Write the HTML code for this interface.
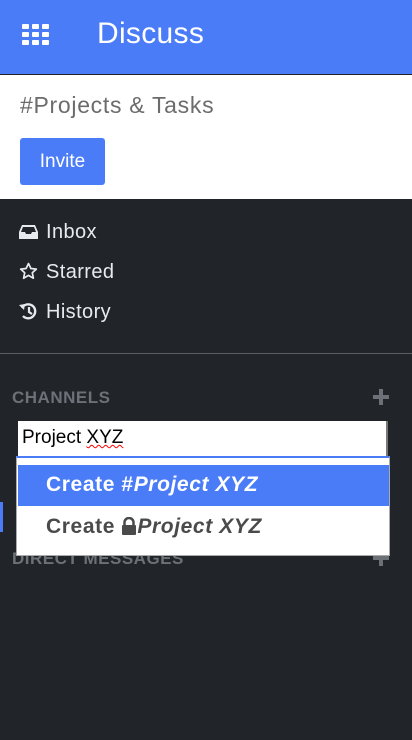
<!DOCTYPE html>
<html><head><style>
*{margin:0;padding:0;box-sizing:border-box}
body{width:412px;height:740px;overflow:hidden;background:#212529;font-family:"Liberation Sans",sans-serif;position:relative}
.hdr{position:absolute;left:0;top:0;width:412px;height:75px;background:#4a7cf8;border-bottom:1px solid #1f2329}
.hdr .t{position:absolute;left:97px;top:17px;color:#fff;font-size:30px;letter-spacing:0.3px}
.grid{position:absolute;left:22px;top:24px;width:28px;height:22px}
.grid i{position:absolute;width:7px;height:5px;background:#fff;border-radius:1px}
.top{position:absolute;left:0;top:75px;width:412px;height:124px;background:#fff}
.top .n{position:absolute;left:20px;top:17px;font-size:23px;color:#6c6c6c;letter-spacing:0.7px}
.btn{position:absolute;left:20px;top:63px;width:85px;height:47px;background:#4a7cf8;border-radius:3px;color:#fff;font-size:19px;text-align:center;line-height:47px}
.it{position:absolute;left:46px;color:#e8ebee;font-size:20px;letter-spacing:0.4px}
.ic{position:absolute;left:19px}
.sep{position:absolute;left:0;top:353px;width:412px;height:1px;background:#5a5e63}
.lab{position:absolute;left:12px;color:#6c7178;font-size:17px;font-weight:bold;letter-spacing:0.5px}
.plus{position:absolute;left:373px;top:0;width:16px;height:16px}
.plus:before{content:"";position:absolute;left:6px;top:0;width:4px;height:16px;background:#6c7178}
.plus:after{content:"";position:absolute;left:0;top:6px;width:16px;height:4px;background:#6c7178}
.inp{position:absolute;left:18px;top:421px;width:370px;height:35px;background:#fff;border-right:2px solid #777;font-size:19px;padding:6px 0 0 4px;color:#000}
.inp u{text-decoration:underline wavy red;text-decoration-thickness:1px}
.dd{position:absolute;left:16px;top:456px;width:374px;height:100px;background:#fff;border:1px solid #aaa;border-top:2px solid #4a7cf8}
.row{position:absolute;left:1px;width:371px;height:41px;font-size:21px;font-weight:bold;padding:8px 0 0 28px;letter-spacing:0.6px}
.row em{font-style:italic}
.bar{position:absolute;left:0;top:502px;width:3px;height:30px;background:#4a7cf8}
</style></head><body>
<div class="hdr">
<div class="grid">
<i style="left:0;top:0"></i><i style="left:10px;top:0"></i><i style="left:20px;top:0"></i>
<i style="left:0;top:8px"></i><i style="left:10px;top:8px"></i><i style="left:20px;top:8px"></i>
<i style="left:0;top:16px"></i><i style="left:10px;top:16px"></i><i style="left:20px;top:16px"></i>
</div>
<div class="t">Discuss</div></div>
<div class="top"><div class="n">#Projects &amp; Tasks</div><div class="btn">Invite</div></div>
<svg class="ic" style="top:224px" width="19" height="16" viewBox="0 0 19 16"><path d="M3 1h13l3 7v7H0V8z" fill="#e8ebee"/><path d="M4 3h11l2 5h-4l-1 2H7L6 8H2z" fill="#212529"/></svg>
<div class="it" style="top:221px">Inbox</div>
<svg class="ic" style="top:262px" width="19" height="19" viewBox="0 0 19 19"><path d="M9.5 1.5l2.4 5 5.4.6-4 3.7 1.1 5.4-4.9-2.8-4.9 2.8 1.1-5.4-4-3.7 5.4-.6z" fill="none" stroke="#e8ebee" stroke-width="1.7" stroke-linejoin="round"/></svg>
<div class="it" style="top:261px">Starred</div>
<svg class="ic" style="top:302px" width="19" height="19" viewBox="0 0 19 19"><path d="M3 6A7 7 0 1 1 4 14" fill="none" stroke="#e8ebee" stroke-width="2.4"/><path d="M0 3l5 5 1-6z" fill="#e8ebee"/><path d="M10 5v5l3 2" fill="none" stroke="#e8ebee" stroke-width="2.2"/></svg>
<div class="it" style="top:301px">History</div>
<div class="sep"></div>
<div class="lab" style="top:388px">CHANNELS</div><div class="plus" style="top:389px"></div>
<div class="lab" style="top:549px">DIRECT MESSAGES</div><div class="plus" style="top:550px"></div>
<div class="bar"></div>
<div class="inp">Project <u>XYZ</u></div>
<div class="dd">
<div class="row" style="top:7px;background:#4a7cf8;color:#fff">Create #<em>Project XYZ</em></div>
<div class="row" style="top:49px;color:#4a4a4a">Create <svg width="16" height="18" viewBox="0 0 16 18" style="vertical-align:-2px"><path d="M3.5 8V5.5a4.5 4.5 0 0 1 9 0V8" fill="none" stroke="#4a4a4a" stroke-width="2.5"/><rect x="1" y="8" width="14" height="10" rx="1" fill="#4a4a4a"/></svg><em>Project XYZ</em></div>
</div>
</body></html>
